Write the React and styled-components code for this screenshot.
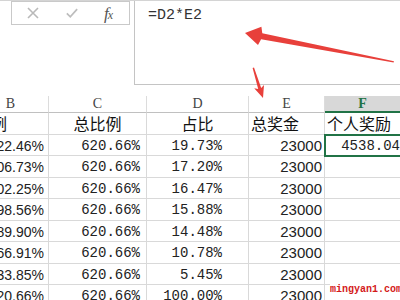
import styled, { createGlobalStyle } from 'styled-components';

const GlobalStyle = createGlobalStyle`
  html, body {
    margin: 0;
    padding: 0;
    background: #ffffff;
    overflow: hidden;
  }
  body {
    font-family: "Liberation Sans", Arial, "Noto Sans CJK SC", sans-serif;
  }
`;

const columns = [
  { key: 'B', width: 76, pad: 4, font: 'sans', size: 14 },
  { key: 'C', width: 98, pad: 6, font: 'mono', size: 14 },
  { key: 'D', width: 102, pad: 26, font: 'mono', size: 14 },
  { key: 'E', width: 76, pad: 2, font: 'sans', size: 15 },
  { key: 'F', width: 76, pad: 0, font: 'mono', size: 14 },
];

const titles = [
  { text: '比例', align: 'left' },
  { text: '总比例', align: 'center' },
  { text: '占比', align: 'center' },
  { text: '总奖金', align: 'left' },
  { text: '个人奖励', align: 'left' },
];

const rows = [
  ['122.46%', '620.66%', '19.73%', '23000', '4538.04'],
  ['106.73%', '620.66%', '17.20%', '23000', ''],
  ['102.25%', '620.66%', '16.47%', '23000', ''],
  ['98.56%', '620.66%', '15.88%', '23000', ''],
  ['89.90%', '620.66%', '14.48%', '23000', ''],
  ['66.91%', '620.66%', '10.78%', '23000', ''],
  ['33.85%', '620.66%', '5.45%', '23000', ''],
  ['620.66%', '620.66%', '100.00%', '23000', ''],
];

const App = () => {
  return (
    <Page>
      <GlobalStyle />
      <FormulaBar>
        <NameArea>
          <IconBox>
            <IconSlot>
              <svg width='12' height='12' viewBox='0 0 12 12'>
                <path d='M1 1 L11 11 M11 1 L1 11' stroke='#b9b9b9' strokeWidth='1.6' fill='none' />
              </svg>
            </IconSlot>
            <IconSlot>
              <svg width='14' height='12' viewBox='0 0 14 12'>
                <path d='M1 6.5 L5 10.5 L13 1.5' stroke='#bdbdbd' strokeWidth='2' fill='none' />
              </svg>
            </IconSlot>
            <FxLabel>
              f<small>x</small>
            </FxLabel>
          </IconBox>
        </NameArea>
        <FormulaInput>=D2*E2</FormulaInput>
      </FormulaBar>

      <Sheet>
        {columns.map((col) => (
          <HeadCell key={col.key} $active={col.key === 'F'}>
            {col.key}
          </HeadCell>
        ))}
        {titles.map((t, i) => (
          <TitleCell key={'t' + i} $align={t.align}>
            {t.text}
          </TitleCell>
        ))}
        {rows.map((row, r) =>
          row.map((value, c) => (
            <Cell
              key={r + '-' + c}
              $font={columns[c].font}
              $size={columns[c].size}
              $pad={columns[c].pad}
              $selected={r === 0 && c === 4}
            >
              {value}
            </Cell>
          ))
        )}
      </Sheet>

      <Arrows width='400' height='300' viewBox='0 0 400 300'>
        <polygon
          points='245,33 261.4,26.8 262.3,33.2 394,61.2 393.6,62.6 261.1,39.2 258,45'
          fill='#e8403b'
        />
        <polygon
          points='263,98 254.2,88.3 258.2,88.9 252.6,68 254,67.6 261.2,87.9 264,85'
          fill='#e8403b'
        />
      </Arrows>

      <Watermark>mingyan1.com</Watermark>
    </Page>
  );
};

// styles
const Page = styled.div`
  position: relative;
  width: 400px;
  height: 300px;
  overflow: hidden;
  background: #ffffff;
`;

const FormulaBar = styled.div`
  display: flex;
  height: 85px;
  border-top: 1px solid #d4d4d4;
  box-sizing: border-box;
`;

const NameArea = styled.div`
  width: 134px;
  flex: none;
  padding-left: 11px;
  box-sizing: border-box;
`;

const IconBox = styled.div`
  display: flex;
  align-items: center;
  width: 119px;
  height: 24px;
  box-sizing: border-box;
  border: 1px solid #c9c9c9;
  padding-left: 15px;
`;

const IconSlot = styled.span`
  display: flex;
  align-items: center;
  justify-content: center;
  width: 12px;
  margin-right: 27px;
`;

const FxLabel = styled.span`
  margin-left: -1px;
  font-family: "Liberation Serif", "Times New Roman", serif;
  font-style: italic;
  font-size: 17px;
  line-height: 1;
  color: #555555;
  letter-spacing: -1px;

  small {
    font-size: 12px;
  }
`;

const FormulaInput = styled.div`
  flex: 1;
  border-left: 1px solid #c4c4c4;
  border-bottom: 1px solid #c4c4c4;
  padding: 6px 0 0 13px;
  font-family: "Liberation Mono", "Courier New", monospace;
  font-size: 15px;
  color: #333333;
`;

const Sheet = styled.div`
  display: grid;
  grid-template-columns: ${columns.map((c) => c.width + 'px').join(' ')};
  grid-template-rows: 17px;
  grid-auto-rows: 21.5px;
  margin-top: 11px;
  margin-left: -27px;
`;

const HeadCell = styled.div`
  display: flex;
  align-items: center;
  justify-content: center;
  box-sizing: border-box;
  border-right: 1px solid #dcdcdc;
  border-bottom: ${(p) => (p.$active ? '2px solid #217346' : '1px solid #c0c0c0')};
  background: ${(p) => (p.$active ? '#d8d8d8' : '#ffffff')};
  color: ${(p) => (p.$active ? '#217346' : '#444444')};
  font-weight: ${(p) => (p.$active ? 'bold' : 'normal')};
  font-family: "Liberation Serif", "Times New Roman", serif;
  font-size: 14px;
  line-height: 16px;
`;

const TitleCell = styled.div`
  display: flex;
  align-items: center;
  justify-content: ${(p) => (p.$align === 'center' ? 'center' : 'flex-start')};
  padding-left: ${(p) => (p.$align === 'center' ? '0' : '2px')};
  box-sizing: border-box;
  border-right: 1px solid #d9d9d9;
  border-bottom: 1px solid #d9d9d9;
  font-family: "Noto Sans CJK SC", sans-serif;
  font-size: 16px;
  line-height: 18px;
  color: #111111;
  white-space: nowrap;
`;

const fonts = {
  sans: '"Liberation Sans", Arial, sans-serif',
  mono: '"Liberation Mono", "Courier New", monospace',
};

const Cell = styled.div`
  position: relative;
  display: flex;
  align-items: center;
  justify-content: flex-end;
  padding-right: ${(p) => p.$pad}px;
  padding-top: 2px;
  box-sizing: border-box;
  border-right: 1px solid #d9d9d9;
  border-bottom: 1px solid #d9d9d9;
  font-family: ${(p) => fonts[p.$font]};
  font-size: ${(p) => p.$size}px;
  line-height: 16px;
  color: #222222;
  white-space: nowrap;
  ${(p) =>
    p.$selected &&
    `
    outline: 2px solid #217346;
    outline-offset: -1px;
    z-index: 1;
  `}
`;

const Arrows = styled.svg`
  position: absolute;
  left: 0;
  top: 0;
  pointer-events: none;
`;

const Watermark = styled.div`
  position: absolute;
  left: 330px;
  top: 284px;
  font-family: "Liberation Mono", "Courier New", monospace;
  font-size: 10px;
  font-weight: bold;
  color: #d41a1a;
  background: #ffffff;
  white-space: nowrap;
`;

export default App;
